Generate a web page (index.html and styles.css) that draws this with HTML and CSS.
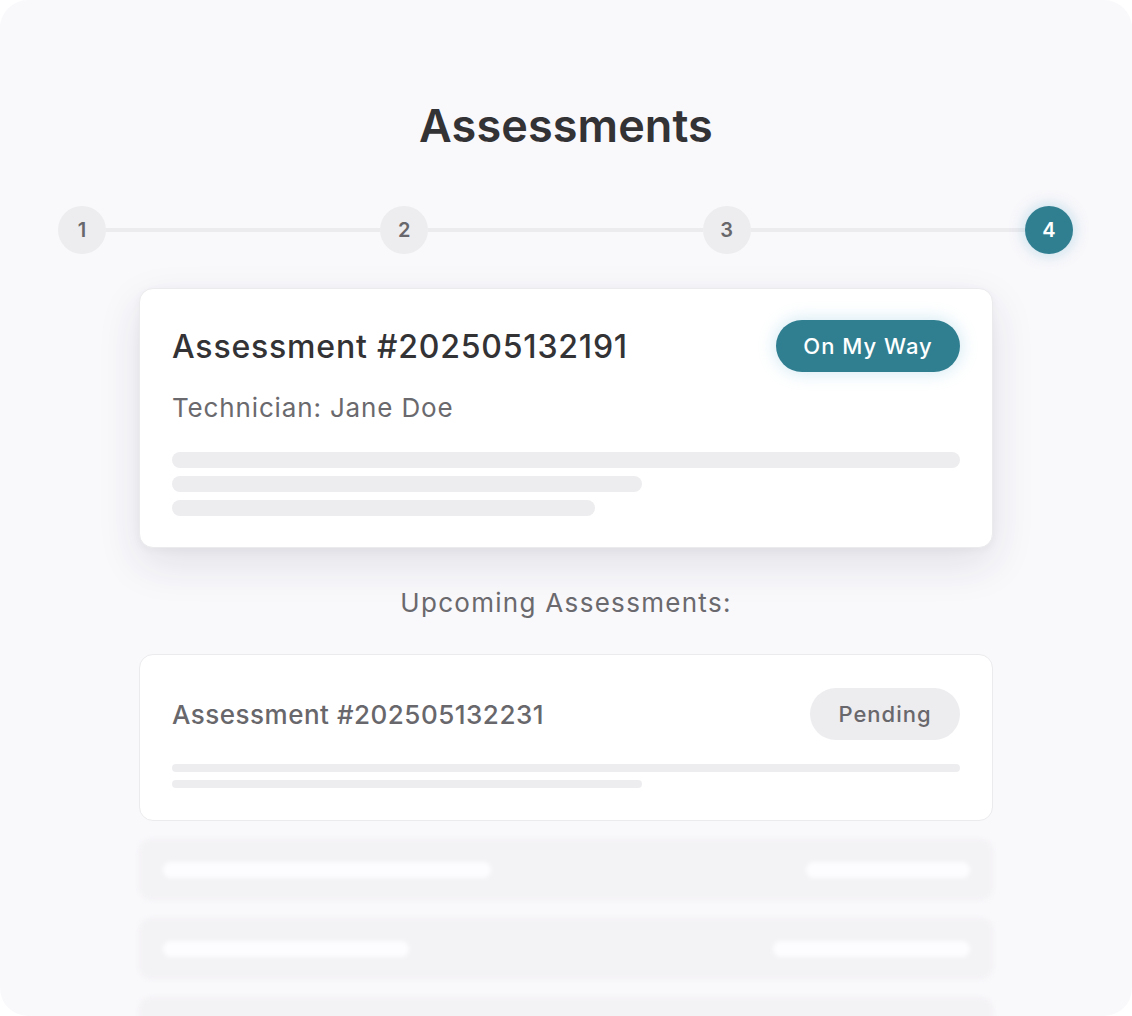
FILE: index.html
```html
<!DOCTYPE html>
<html lang="en">
<head>
<meta charset="utf-8">
<title>Assessments</title>
<link rel="stylesheet" href="styles.css">
</head>
<body>
<div class="frame">
  <h1 class="title">Assessments</h1>

  <div class="stepper">
    <div class="step">1</div>
    <div class="connector"></div>
    <div class="step">2</div>
    <div class="connector"></div>
    <div class="step">3</div>
    <div class="connector"></div>
    <div class="step step-active">4</div>
  </div>

  <div class="content">
    <div class="card card-current">
      <div class="card-head">
        <h2 class="card-title">Assessment #202505132191</h2>
        <span class="badge badge-active">On My Way</span>
      </div>
      <p class="tech">Technician: Jane Doe</p>
      <div class="bars bars-lg">
        <div class="bar bar-full"></div>
        <div class="bar bar-60"></div>
        <div class="bar bar-54"></div>
      </div>
    </div>

    <p class="section-label">Upcoming Assessments:</p>

    <div class="card card-upcoming">
      <div class="card-head">
        <h3 class="card-title-sm">Assessment #202505132231</h3>
        <span class="badge badge-pending">Pending</span>
      </div>
      <div class="bars bars-sm">
        <div class="bar bar-full"></div>
        <div class="bar bar-60"></div>
      </div>
    </div>

    <div class="ghost-list">
      <div class="ghost-row">
        <div class="ghost-bar ghost-l1"></div>
        <div class="ghost-bar ghost-r1"></div>
      </div>
      <div class="ghost-row">
        <div class="ghost-bar ghost-l2"></div>
        <div class="ghost-bar ghost-r2"></div>
      </div>
      <div class="ghost-row"></div>
    </div>
  </div>
</div>
</body>
</html>
```

FILE: styles.css
```css
* { box-sizing: border-box; }

html, body {
  margin: 0;
  padding: 0;
  background: #ffffff;
}

body {
  font-family: Inter, "Noto Sans", "Liberation Sans", sans-serif;
  color: #333235;
}

.frame {
  width: 1132px;
  height: 1016px;
  border-radius: 28px;
  background: #f9f8fb;
  overflow: hidden;
  padding-top: 96px;
}

.title {
  margin: 0;
  text-align: center;
  font-size: 45px;
  line-height: 60px;
  font-weight: 600;
  color: #333235;
  letter-spacing: 0.1px;
}

.stepper {
  display: flex;
  align-items: center;
  padding: 0 59px 0 58px;
  margin-top: 50px;
}

.step {
  width: 48px;
  height: 48px;
  border-radius: 50%;
  background: #edecef;
  color: #68676b;
  font-size: 20px;
  font-weight: 600;
  display: flex;
  align-items: center;
  justify-content: center;
  flex: none;
}

.step-active {
  background: #307f91;
  color: #ffffff;
  box-shadow: 0 0 14px 2px rgba(110, 180, 210, 0.35);
}

.connector {
  flex: 1;
  height: 4px;
  background: #ecebee;
}

.content {
  width: 854px;
  margin: 34px auto 0;
  display: flex;
  flex-direction: column;
}

.card {
  background: #ffffff;
  border: 1px solid #ebeaed;
  border-radius: 14px;
}

.card-current {
  padding: 31px 32px 31px 32px;
  box-shadow: 0 16px 44px rgba(40, 40, 60, 0.11), 0 2px 8px rgba(40, 40, 60, 0.04);
}

.card-head {
  display: flex;
  align-items: center;
  justify-content: space-between;
}

.card-title {
  margin: 0;
  font-size: 32px;
  font-weight: 500;
  color: #333235;
  letter-spacing: 0.8px;
}

.card-title-sm {
  margin: 0;
  font-size: 26px;
  font-weight: 500;
  color: #68676b;
  letter-spacing: 0.5px;
}

.badge {
  height: 52px;
  border-radius: 26px;
  display: flex;
  align-items: center;
  justify-content: center;
  font-size: 22px;
  font-weight: 500;
  letter-spacing: 1px;
}

.badge-active {
  width: 184px;
  background: #307f91;
  color: #ffffff;
  box-shadow: 0 0 16px 2px rgba(120, 190, 220, 0.30);
}

.badge-pending {
  width: 150px;
  background: #edecef;
  color: #68676b;
}

.tech {
  margin: 20px 0 0;
  font-size: 26px;
  line-height: 32px;
  color: #6a696d;
  letter-spacing: 0.85px;
}

.bars {
  display: flex;
  flex-direction: column;
}

.bars-lg {
  margin-top: 28px;
  gap: 8px;
}

.bars-lg .bar { height: 16px; }

.bars-sm {
  margin-top: 24px;
  gap: 8px;
}

.bars-sm .bar { height: 8px; }

.bar {
  background: #edecef;
  border-radius: 8px;
}

.bar-full { width: 100%; }
.bar-60 { width: 59.7%; }
.bar-54 { width: 53.7%; }

.section-label {
  margin: 39px 0 35px;
  text-align: center;
  font-size: 26px;
  line-height: 32px;
  color: #6a696d;
  font-weight: 400;
  letter-spacing: 1.3px;
}

.card-upcoming {
  padding: 32px 32px 32px 32px;
}

.card-upcoming .card-head {
  padding-top: 1px;
}

.ghost-list {
  margin-top: 18px;
  display: flex;
  flex-direction: column;
  gap: 18px;
  filter: blur(2px);
}

.ghost-row {
  height: 61px;
  background: #f3f2f5;
  border-radius: 12px;
  display: flex;
  align-items: center;
  justify-content: space-between;
  padding: 0 23px 0 24px;
}

.ghost-bar {
  height: 16px;
  border-radius: 8px;
  background: #fdfcfe;
}

.ghost-l1 { width: 328px; }
.ghost-r1 { width: 164px; }
.ghost-l2 { width: 246px; }
.ghost-r2 { width: 197px; }
```
